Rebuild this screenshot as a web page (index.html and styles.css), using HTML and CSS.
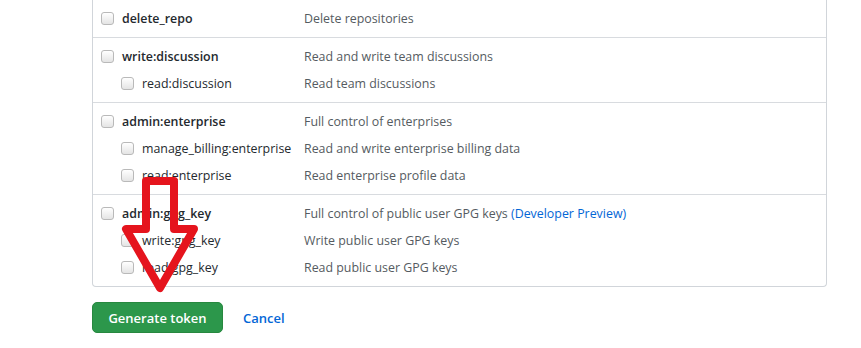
FILE: index.html
```html
<!DOCTYPE html>
<html lang="en">
<head>
  <meta charset="UTF-8" />
  <title>New personal access token</title>
  <link rel="stylesheet" href="styles.css">
</head>
<body>
  <div class="page">
    <div class="scopes">

      <div class="scope-group">
        <div class="scope-row">
          <label class="scope-name"><input type="checkbox"> delete_repo</label>
          <span class="scope-desc">Delete repositories</span>
        </div>
      </div>

      <div class="scope-group">
        <div class="scope-row">
          <label class="scope-name"><input type="checkbox"> write:discussion</label>
          <span class="scope-desc">Read and write team discussions</span>
        </div>
        <div class="scope-row child">
          <label class="scope-name"><input type="checkbox"> read:discussion</label>
          <span class="scope-desc">Read team discussions</span>
        </div>
      </div>

      <div class="scope-group">
        <div class="scope-row">
          <label class="scope-name"><input type="checkbox"> admin:enterprise</label>
          <span class="scope-desc">Full control of enterprises</span>
        </div>
        <div class="scope-row child">
          <label class="scope-name"><input type="checkbox"> manage_billing:enterprise</label>
          <span class="scope-desc">Read and write enterprise billing data</span>
        </div>
        <div class="scope-row child">
          <label class="scope-name"><input type="checkbox"> read:enterprise</label>
          <span class="scope-desc">Read enterprise profile data</span>
        </div>
      </div>

      <div class="scope-group">
        <div class="scope-row">
          <label class="scope-name"><input type="checkbox"> admin:gpg_key</label>
          <span class="scope-desc">Full control of public user GPG keys <a href="#">(Developer Preview)</a></span>
        </div>
        <div class="scope-row child">
          <label class="scope-name"><input type="checkbox"> write:gpg_key</label>
          <span class="scope-desc">Write public user GPG keys</span>
        </div>
        <div class="scope-row child">
          <label class="scope-name"><input type="checkbox"> read:gpg_key</label>
          <span class="scope-desc">Read public user GPG keys</span>
        </div>
      </div>

    </div>

    <div class="actions">
      <button type="submit" class="btn-primary">Generate token</button>
      <a href="#" class="cancel">Cancel</a>
    </div>

    <!-- la fleche rouge dessinee par dessus -->
    <svg class="arrow" width="100" height="130" viewBox="0 0 100 130">
      <polygon points="28,12 56,12 56,60 76,60 42,119 8,60 28,60"
               fill="none" stroke="#e5141d" stroke-width="8" stroke-linejoin="round" />
    </svg>
  </div>
</body>
</html>
```

FILE: styles.css
```css
body {
  margin: 0;
  background: #fff;
  font-family: "Open Sans", "Noto Sans", Arial, sans-serif;
  font-size: 12.4px;
  color: #24292e;
}

.page {
  position: relative;
  width: 735px;
  margin-left: 92px;
  margin-top: 0;
}

.scopes {
  border: 1px solid #d1d5da;
  border-top: none;
  border-radius: 0 0 4px 4px;
}

.scope-group {
  padding: 5px 0;
  border-top: 1px solid #d8dbdf;
}

.scope-group:first-child {
  border-top: none;
}

.scope-row {
  display: flex;
  align-items: center;
  height: 27px;
  padding-left: 8px;
}

.scope-name {
  width: 203px;
  display: flex;
  align-items: center;
  font-weight: 600;
  color: #24292e;
}

.scope-row.child .scope-name {
  padding-left: 20px;
  width: 183px;
  font-weight: 400;
}

.scope-desc {
  color: #555b61;
}

.scope-desc a {
  color: #0366d6;
  text-decoration: none;
}

input[type="checkbox"] {
  appearance: none;
  -webkit-appearance: none;
  width: 13px;
  height: 13px;
  margin: 0 8px 0 0;
  border: 1px solid #b9b9b9;
  border-radius: 3px;
  background: linear-gradient(#ffffff, #e4e4e4);
}

.actions {
  display: flex;
  align-items: center;
  gap: 20px;
  margin-top: 15px;
}

.btn-primary {
  width: 131px;
  height: 31px;
  border: 1px solid #27883f;
  border-radius: 5px;
  background: #2c974b;
  color: #fff;
  font-family: inherit;
  font-size: 13px;
  font-weight: 600;
}

.cancel {
  color: #0366d6;
  font-weight: 600;
  font-size: 13px;
  text-decoration: none;
}

.arrow {
  position: absolute;
  left: 26px;
  top: 169px;
}
```
